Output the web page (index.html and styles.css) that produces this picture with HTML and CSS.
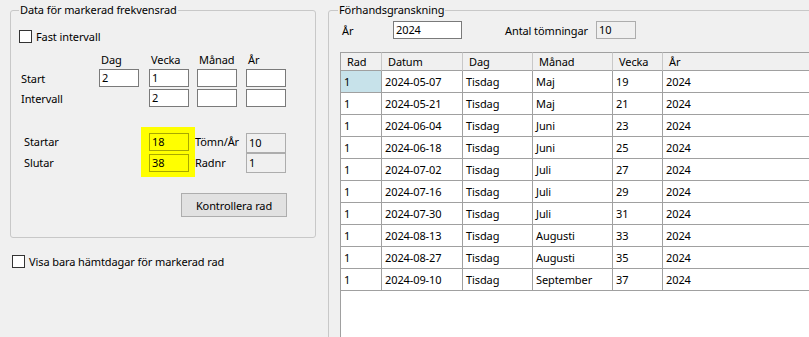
FILE: index.html
```html
<!DOCTYPE html>
<html lang="sv">
<head>
<meta charset="utf-8">
<title>Frekvensrad</title>
<link rel="stylesheet" href="styles.css">
</head>
<body>
<div class="window">
  <div class="left-col">
    <fieldset class="group group-left">
      <legend>Data för markerad frekvensrad</legend>
      <div class="inner">
        <div class="check check-fast"><span class="box"></span><span>Fast intervall</span></div>
        <div class="period-grid">
          <span></span>
          <span class="colhead">Dag</span>
          <span class="colhead">Vecka</span>
          <span class="colhead">Månad</span>
          <span class="colhead">År</span>
          <span class="rowlabel">Start</span>
          <div class="tb">2</div>
          <div class="tb">1</div>
          <div class="tb"></div>
          <div class="tb"></div>
          <span class="rowlabel">Intervall</span>
          <span></span>
          <div class="tb">2</div>
          <div class="tb"></div>
          <div class="tb"></div>
        </div>
        <div class="range">
          <div class="range-labels">
            <span>Startar</span>
            <span>Slutar</span>
          </div>
          <div class="yellow-panel">
            <div class="tb tb-yellow">18</div>
            <div class="tb tb-yellow">38</div>
          </div>
          <div class="range-labels2">
            <span>Tömn/År</span>
            <span>Radnr</span>
          </div>
          <div class="range-ro">
            <div class="tb tb-ro">10</div>
            <div class="tb tb-ro">1</div>
          </div>
        </div>
        <div class="btn-row">
          <button class="btn" type="button">Kontrollera rad</button>
        </div>
      </div>
    </fieldset>
    <div class="check check-visa"><span class="box"></span><span>Visa bara hämtdagar för markerad rad</span></div>
  </div>

  <fieldset class="group group-right">
    <legend>Förhandsgranskning</legend>
    <div class="inner-right">
      <div class="top-row">
        <span class="lbl-ar">År</span>
        <div class="tb tb-year">2024</div>
        <span class="lbl-antal">Antal tömningar</span>
        <div class="tb tb-ro tb-antal">10</div>
      </div>
      <div class="grid-wrap">
        <table class="grid">
          <thead>
            <tr>
              <th class="c-rad">Rad</th>
              <th class="c-datum">Datum</th>
              <th class="c-dag">Dag</th>
              <th class="c-manad">Månad</th>
              <th class="c-vecka">Vecka</th>
              <th class="c-ar">År</th>
            </tr>
          </thead>
          <tbody>
            <tr><td class="sel">1</td><td>2024-05-07</td><td>Tisdag</td><td>Maj</td><td>19</td><td>2024</td></tr>
            <tr><td>1</td><td>2024-05-21</td><td>Tisdag</td><td>Maj</td><td>21</td><td>2024</td></tr>
            <tr><td>1</td><td>2024-06-04</td><td>Tisdag</td><td>Juni</td><td>23</td><td>2024</td></tr>
            <tr><td>1</td><td>2024-06-18</td><td>Tisdag</td><td>Juni</td><td>25</td><td>2024</td></tr>
            <tr><td>1</td><td>2024-07-02</td><td>Tisdag</td><td>Juli</td><td>27</td><td>2024</td></tr>
            <tr><td>1</td><td>2024-07-16</td><td>Tisdag</td><td>Juli</td><td>29</td><td>2024</td></tr>
            <tr><td>1</td><td>2024-07-30</td><td>Tisdag</td><td>Juli</td><td>31</td><td>2024</td></tr>
            <tr><td>1</td><td>2024-08-13</td><td>Tisdag</td><td>Augusti</td><td>33</td><td>2024</td></tr>
            <tr><td>1</td><td>2024-08-27</td><td>Tisdag</td><td>Augusti</td><td>35</td><td>2024</td></tr>
            <tr><td>1</td><td>2024-09-10</td><td>Tisdag</td><td>September</td><td>37</td><td>2024</td></tr>
          </tbody>
        </table>
      </div>
    </div>
  </fieldset>
</div>
</body>
</html>
```

FILE: styles.css
```css
* { box-sizing: border-box; }

html, body {
  margin: 0;
  padding: 0;
}

body {
  background: #f0f0f0;
  font-family: "Noto Sans", "Segoe UI", sans-serif;
  font-size: 11px;
  letter-spacing: -0.1px;
  color: #000;
  overflow: hidden;
  width: 809px;
  height: 337px;
}

.window {
  display: flex;
  gap: 12px;
  padding: 2px 0 0 10px;
  width: 809px;
  height: 337px;
  overflow: hidden;
  white-space: nowrap;
}

.left-col {
  width: 306px;
  flex: none;
}

fieldset.group {
  margin: 0;
  padding: 0;
  border: 1px solid #c8c8c8;
  border-radius: 3px;
  min-width: 0;
}

fieldset.group legend {
  padding: 0 1px;
  line-height: 16px;
  height: 16px;
}

.group-left {
  height: 236px;
}

.group-left legend {
  margin-left: 8px;
}

.inner {
  padding: 0 28px 0 8px;
}

/* checkbox */
.check {
  display: flex;
  align-items: center;
  height: 15px;
  line-height: 15px;
}

.box {
  width: 13px;
  height: 13px;
  border: 1px solid #333;
  background: #fff;
  margin-right: 4px;
  flex: none;
}

.check-fast {
  margin-top: 11px;
}

.check-visa {
  margin-top: 16px;
  padding-left: 2px;
}

/* period grid */
.period-grid {
  display: grid;
  grid-template-columns: 80px 50px 48px 49px 40px;
  grid-template-rows: 15px 18px 18px;
  row-gap: 2px;
  margin-top: 8px;
  align-items: center;
}

.colhead {
  padding-left: 2px;
  line-height: 15px;
}

.rowlabel {
  padding-left: 2px;
}

.tb {
  width: 40px;
  height: 18px;
  border: 1px solid #7a7a7a;
  background: #fff;
  line-height: 16px;
  padding-left: 2px;
}

/* range */
.range {
  display: flex;
  margin-top: 20px;
}

.range-labels {
  width: 122px;
  padding: 6px 0 0 5px;
  display: flex;
  flex-direction: column;
  gap: 3px;
}

.range-labels span,
.range-labels2 span {
  height: 18px;
  line-height: 18px;
}

.yellow-panel {
  width: 54px;
  height: 50px;
  background: #ffff00;
  padding: 6px 6px 5px 8px;
  display: flex;
  flex-direction: column;
  gap: 3px;
}

.tb-yellow {
  background: #ffff00;
  border-color: #a8a800;
}

.range-labels2 {
  width: 51px;
  padding-top: 6px;
  display: flex;
  flex-direction: column;
  gap: 3px;
}

.range-ro {
  padding-top: 6px;
  display: flex;
  flex-direction: column;
}

.tb-ro {
  background: #f0f0f0;
  border-color: #adadad;
  height: 20px;
  line-height: 18px;
}

.btn-row {
  display: flex;
  justify-content: flex-end;
  margin-top: 16px;
}

.btn {
  width: 106px;
  height: 24px;
  background: #e1e1e1;
  border: 1px solid #adadad;
  border-radius: 0;
  font-family: inherit;
  font-size: 11px;
  letter-spacing: -0.1px;
  color: #000;
  padding: 0;
}

/* right group */
.group-right {
  flex: none;
  width: 520px;
  height: 400px;
}

.group-right legend {
  margin-left: 9px;
}

.inner-right {
  padding: 0 0 0 11px;
}

.top-row {
  display: flex;
  align-items: center;
  margin-top: 3px;
  height: 18px;
  padding-left: 2px;
}

.lbl-ar {
  width: 51px;
}

.tb-year {
  width: 69px;
}

.lbl-antal {
  margin-left: 43px;
  width: 91px;
}

.tb-antal {
  height: 18px;
  line-height: 16px;
}

.grid-wrap {
  margin-top: 13px;
  background: #fff;
  border-left: 1px solid #a0a0a0;
  height: 300px;
}

.grid {
  border-collapse: separate;
  border-spacing: 0;
  table-layout: fixed;
  width: 522px;
}

.grid th,
.grid td {
  box-sizing: border-box;
  text-align: left;
  font-weight: normal;
  white-space: nowrap;
  overflow: hidden;
  border-right: 1px solid #a0a0a0;
  border-bottom: 1px solid #a0a0a0;
}

.grid th {
  height: 19px;
  border-top: 1px solid #a0a0a0;
  background: #f0f0f0;
  padding: 0 0 0 6px;
  line-height: 16px;
  border-right-color: #c8c8c8;
}

.grid td {
  height: 22px;
  padding: 0 0 0 3px;
  line-height: 21px;
}

.grid td.sel {
  background: #c7e2ea;
}

.c-rad { width: 41px; }
.c-datum { width: 81px; }
.c-dag { width: 70px; }
.c-manad { width: 80px; }
.c-vecka { width: 50px; }
.c-ar { width: 200px; }
```
